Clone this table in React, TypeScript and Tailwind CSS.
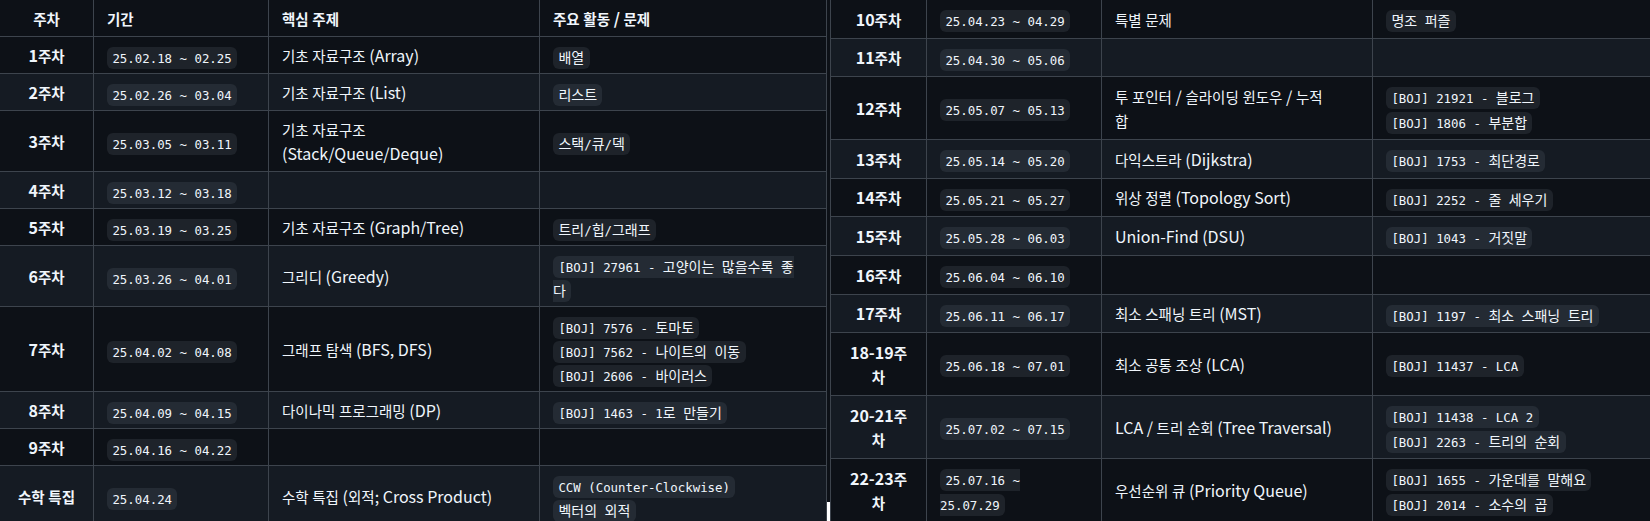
import { Fragment } from "react";

type Row = { wk: string; date: string; topic: string; items: string[] };

const LEFT: Row[] = [
  { wk: "1주차", date: "25.02.18 ~ 02.25", topic: "기초 자료구조 (Array)", items: ["배열"] },
  { wk: "2주차", date: "25.02.26 ~ 03.04", topic: "기초 자료구조 (List)", items: ["리스트"] },
  { wk: "3주차", date: "25.03.05 ~ 03.11", topic: "기초 자료구조\n(Stack/Queue/Deque)", items: ["스택/큐/덱"] },
  { wk: "4주차", date: "25.03.12 ~ 03.18", topic: "", items: [] },
  { wk: "5주차", date: "25.03.19 ~ 03.25", topic: "기초 자료구조 (Graph/Tree)", items: ["트리/힙/그래프"] },
  { wk: "6주차", date: "25.03.26 ~ 04.01", topic: "그리디 (Greedy)", items: ["[BOJ] 27961 - 고양이는 많을수록 좋\n다"] },
  {
    wk: "7주차",
    date: "25.04.02 ~ 04.08",
    topic: "그래프 탐색 (BFS, DFS)",
    items: ["[BOJ] 7576 - 토마토", "[BOJ] 7562 - 나이트의 이동", "[BOJ] 2606 - 바이러스"],
  },
  { wk: "8주차", date: "25.04.09 ~ 04.15", topic: "다이나믹 프로그래밍 (DP)", items: ["[BOJ] 1463 - 1로 만들기"] },
  { wk: "9주차", date: "25.04.16 ~ 04.22", topic: "", items: [] },
  {
    wk: "수학 특집",
    date: "25.04.24",
    topic: "수학 특집 (외적; Cross Product)",
    items: ["CCW (Counter-Clockwise)", "벡터의 외적"],
  },
];

const RIGHT: Row[] = [
  { wk: "10주차", date: "25.04.23 ~ 04.29", topic: "특별 문제", items: ["명조 퍼즐"] },
  { wk: "11주차", date: "25.04.30 ~ 05.06", topic: "", items: [] },
  {
    wk: "12주차",
    date: "25.05.07 ~ 05.13",
    topic: "투 포인터 / 슬라이딩 윈도우 / 누적\n합",
    items: ["[BOJ] 21921 - 블로그", "[BOJ] 1806 - 부분합"],
  },
  { wk: "13주차", date: "25.05.14 ~ 05.20", topic: "다익스트라 (Dijkstra)", items: ["[BOJ] 1753 - 최단경로"] },
  { wk: "14주차", date: "25.05.21 ~ 05.27", topic: "위상 정렬 (Topology Sort)", items: ["[BOJ] 2252 - 줄 세우기"] },
  { wk: "15주차", date: "25.05.28 ~ 06.03", topic: "Union-Find (DSU)", items: ["[BOJ] 1043 - 거짓말"] },
  { wk: "16주차", date: "25.06.04 ~ 06.10", topic: "", items: [] },
  { wk: "17주차", date: "25.06.11 ~ 06.17", topic: "최소 스패닝 트리 (MST)", items: ["[BOJ] 1197 - 최소 스패닝 트리"] },
  { wk: "18-19주\n차", date: "25.06.18 ~ 07.01", topic: "최소 공통 조상 (LCA)", items: ["[BOJ] 11437 - LCA"] },
  {
    wk: "20-21주\n차",
    date: "25.07.02 ~ 07.15",
    topic: "LCA / 트리 순회 (Tree Traversal)",
    items: ["[BOJ] 11438 - LCA 2", "[BOJ] 2263 - 트리의 순회"],
  },
  {
    wk: "22-23주\n차",
    date: "25.07.16 ~\n25.07.29",
    topic: "우선순위 큐 (Priority Queue)",
    items: ["[BOJ] 1655 - 가운데를 말해요", "[BOJ] 2014 - 소수의 곱"],
  },
];

// Hangul runs get their own size so the CJK font lands at roughly Malgun Gothic's advance
function Txt({ s, ko }: { s: string; ko: string }) {
  return (
    <>
      {s.split("\n").map((line, i) => (
        <Fragment key={i}>
          {i > 0 && <br />}
          {line.split(/([가-힣]+)/).map((part, j) =>
            /[가-힣]/.test(part) ? (
              <span key={j} className={ko}>
                {part}
              </span>
            ) : (
              part
            )
          )}
        </Fragment>
      ))}
    </>
  );
}

function Code({ s }: { s: string }) {
  return (
    <code className="rounded-md bg-[#656c7633] px-[5.4px] py-[3.5px] font-['DejaVu_Sans_Mono',monospace] text-[12.4px] leading-[14px]">
      <Txt s={s} ko="font-['Noto_Sans_CJK_KR',sans-serif] text-[14px]" />
    </code>
  );
}

function Table({ rows, start, head }: { rows: Row[]; start: number; head?: boolean }) {
  const td = head
    ? "border border-[#3d444d] px-[13px] py-[6px] leading-6"
    : "border border-[#3d444d] px-[13px] py-[6.6px] leading-[24.4px]";
  const ko = "text-[14.5px] leading-[18px]";

  return (
    <table
      className={`-mt-px table-fixed border-collapse text-[16px] text-[#f0f6fc] ${head ? "w-[828px]" : "w-[830px]"}`}
    >
      <colgroup>
        <col className={head ? "w-[94px]" : "w-[96px]"} />
        <col className="w-[175px]" />
        <col className="w-[271px]" />
        <col className="w-[287px]" />
      </colgroup>
      {head && (
        <thead>
          <tr className="bg-[#0d1117]">
            <th className={`${td} text-center font-semibold`}>
              <Txt s="주차" ko={ko} />
            </th>
            <th className={`${td} text-left font-semibold`}>
              <Txt s="기간" ko={ko} />
            </th>
            <th className={`${td} text-left font-semibold`}>
              <Txt s="핵심 주제" ko={ko} />
            </th>
            <th className={`${td} text-left font-semibold`}>
              <Txt s="주요 활동 / 문제" ko={ko} />
            </th>
          </tr>
        </thead>
      )}
      <tbody>
        {rows.map((r, i) => (
          <tr key={r.wk} className={(start + i) % 2 === 0 ? "bg-[#151b23]" : "bg-[#0d1117]"}>
            <td className={`${td} text-center font-semibold`}>
              <Txt s={r.wk} ko={ko} />
            </td>
            <td className={td}>
              <Code s={r.date} />
            </td>
            <td className={td}>
              <Txt s={r.topic} ko={ko} />
            </td>
            <td className={td}>
              {r.items.map((it, k) => (
                <Fragment key={k}>
                  {k > 0 && <br />}
                  <Code s={it} />
                </Fragment>
              ))}
            </td>
          </tr>
        ))}
      </tbody>
    </table>
  );
}

export default function App() {
  return (
    <div className="flex h-[521px] w-[1650px] overflow-hidden bg-[#0d1117] font-['Noto_Sans_CJK_KR',sans-serif]">
      <div className="w-[827px] shrink-0 overflow-hidden">
        <div className="-ml-px">
          <Table rows={LEFT} start={1} head />
        </div>
      </div>
      <div className="flex w-[3px] shrink-0 flex-col">
        <div className="flex-1 bg-[#0d1117]" />
        <div className="h-[19px] bg-white" />
      </div>
      <div className="min-w-0 flex-1 overflow-hidden">
        <Table rows={RIGHT} start={11} />
      </div>
    </div>
  );
}
